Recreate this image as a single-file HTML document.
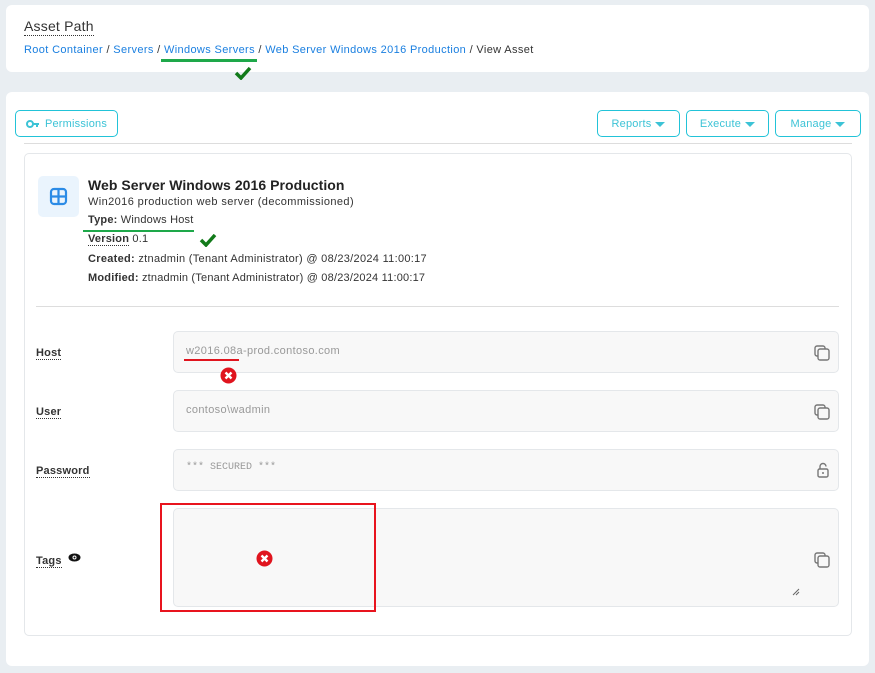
<!DOCTYPE html>
<html><head><style>
*{box-sizing:border-box;margin:0;padding:0}
body{width:875px;height:673px;background:#e9eef2;font-family:"Liberation Sans",sans-serif;position:relative;overflow:hidden;color:#222;letter-spacing:0.2px}
.abs{position:absolute}
.card{position:absolute;background:#fff;border-radius:6px}
a{color:#1a7fe0;text-decoration:none}
.btn{position:absolute;border:1px solid #22c3d8;border-radius:5px;color:#3cc3d6;font-size:11px;display:flex;align-items:center;justify-content:center;height:27px;top:110px}
.tri{display:inline-block;width:0;height:0;border-left:5px solid transparent;border-right:5px solid transparent;border-top:5px solid #3cc3d6;margin-left:4px;margin-top:2px}
.lbl{position:absolute;left:36px;font-size:11px;font-weight:bold;color:#333;border-bottom:1px dotted #333;line-height:12px}
.inp{position:absolute;left:173px;width:666px;background:#f8f8f8;border:1px solid #e4e7ea;border-radius:5px;font-size:11px;color:#999;padding-left:12px}
.ic{position:absolute;right:8px}
.info{position:absolute;left:88px;font-size:11px;color:#333}
</style></head><body>
<div class="card" style="left:6px;top:5px;width:863px;height:67px">
 <div class="abs" style="left:18px;top:13px;font-size:14px;color:#333;border-bottom:1px dotted #333;line-height:17px">Asset Path</div>
 <div class="abs" style="left:18px;top:39px;font-size:11px;color:#333;white-space:nowrap;letter-spacing:0.36px"><a>Root Container</a> / <a>Servers</a> / <a>Windows Servers</a> / <a>Web Server Windows 2016 Production</a> / View Asset</div>
</div>
<div class="abs" style="left:161px;top:59px;width:96px;height:3px;background:#1ea84a"></div>
<svg class="abs" style="left:234px;top:66px" width="18" height="14"><path d="M2 7l5 5L16 2" stroke="#127a1a" stroke-width="3.5" fill="none"/></svg>
<div class="card" style="left:6px;top:92px;width:863px;height:574px"></div>
<div class="btn" style="left:15px;width:103px"><svg width="14" height="10" style="margin-right:5px"><circle cx="4" cy="5" r="3" stroke="#3cc3d6" stroke-width="2" fill="none"/><path d="M7 5h6M11 5v3" stroke="#3cc3d6" stroke-width="2"/></svg>Permissions</div>
<div class="btn" style="left:597px;width:83px">Reports<span class="tri"></span></div>
<div class="btn" style="left:686px;width:83px">Execute<span class="tri"></span></div>
<div class="btn" style="left:775px;width:86px">Manage<span class="tri"></span></div>
<div class="abs" style="left:24px;top:143px;width:828px;height:1px;background:#ddd"></div>
<div class="abs" style="left:24px;top:153px;width:828px;height:483px;border:1px solid #e4e7ea;border-radius:5px"></div>
<div class="abs" style="left:38px;top:176px;width:41px;height:41px;background:#eaf4fd;border-radius:5px"></div>
<svg class="abs" style="left:49px;top:187px" width="19" height="19"><rect x="2" y="2" width="15" height="15" rx="3" stroke="#2b8be6" stroke-width="2.2" fill="none"/><path d="M9.5 2v15M2 9.5h15" stroke="#2b8be6" stroke-width="2.2"/></svg>
<div class="info" style="top:177px;font-size:14px;font-weight:bold;color:#222;letter-spacing:0.05px">Web Server Windows 2016 Production</div>
<div class="info" style="top:196px;letter-spacing:0.4px">Win2016 production web server (decommissioned)</div>
<div class="info" style="top:214px"><b>Type:</b> Windows Host</div>
<div class="abs" style="left:83px;top:230px;width:111px;height:2px;background:#1ea84a"></div>
<div class="info" style="top:233px"><b style="border-bottom:1px dotted #333">Version</b> 0.1</div>
<svg class="abs" style="left:199px;top:234px" width="18" height="13"><path d="M2 6l5 5L16 1" stroke="#127a1a" stroke-width="3.5" fill="none"/></svg>
<div class="info" style="top:253px;letter-spacing:0.3px"><b>Created:</b> ztnadmin (Tenant Administrator) @ 08/23/2024 11:00:17</div>
<div class="info" style="top:272px;letter-spacing:0.2px"><b>Modified:</b> ztnadmin (Tenant Administrator) @ 08/23/2024 11:00:17</div>
<div class="abs" style="left:36px;top:306px;width:803px;height:1px;background:#ddd"></div>

<div class="lbl" style="top:347px">Host</div>
<div class="inp" style="top:331px;height:42px;line-height:38px;letter-spacing:0.35px">w2016.08a-prod.contoso.com<svg class="ic" style="top:13px" width="16" height="16"><rect x="1" y="1" width="10" height="10" rx="2" stroke="#777" stroke-width="1.4" fill="none"/><rect x="4" y="4" width="11" height="11" rx="2" stroke="#777" stroke-width="1.4" fill="#f8f8f8"/></svg></div>
<div class="abs" style="left:184px;top:359px;width:55px;height:2px;background:#e0141e"></div>
<svg class="abs" style="left:220px;top:367px" width="17" height="17"><circle cx="8.5" cy="8.5" r="8" fill="#e0141e"/><path d="M5.5 5.5l6 6M11.5 5.5l-6 6" stroke="#fff" stroke-width="2.4"/></svg>

<div class="lbl" style="top:406px">User</div>
<div class="inp" style="top:390px;height:42px;line-height:38px;letter-spacing:0.35px">contoso\wadmin<svg class="ic" style="top:13px" width="16" height="16"><rect x="1" y="1" width="10" height="10" rx="2" stroke="#777" stroke-width="1.4" fill="none"/><rect x="4" y="4" width="11" height="11" rx="2" stroke="#777" stroke-width="1.4" fill="#f8f8f8"/></svg></div>

<div class="lbl" style="top:465px">Password</div>
<div class="inp" style="top:449px;height:42px;line-height:36px;font-family:'Liberation Mono',monospace;font-size:10px;letter-spacing:0">*** SECURED ***<svg class="ic" style="top:12px" width="14" height="16"><path d="M4 7V4.5a3 3 0 0 1 6 0" stroke="#777" stroke-width="1.4" fill="none"/><rect x="2" y="7" width="10" height="8" rx="1.5" stroke="#777" stroke-width="1.4" fill="none"/><circle cx="7" cy="11" r="1" fill="#777"/></svg></div>

<div class="lbl" style="top:555px">Tags</div>
<svg class="abs" style="left:68px;top:553px" width="13" height="9"><ellipse cx="6.5" cy="4.5" rx="6" ry="4" fill="#111"/><circle cx="6.5" cy="4.5" r="2" fill="#fff"/><circle cx="6.5" cy="4.5" r="1" fill="#111"/></svg>
<div class="inp" style="top:508px;height:99px"><svg class="ic" style="top:43px" width="16" height="16"><rect x="1" y="1" width="10" height="10" rx="2" stroke="#777" stroke-width="1.4" fill="none"/><rect x="4" y="4" width="11" height="11" rx="2" stroke="#777" stroke-width="1.4" fill="#f8f8f8"/></svg><svg class="abs" style="right:38px;bottom:10px" width="8" height="8"><path d="M1 7L7 1M4 7L7 4" stroke="#666" stroke-width="1"/></svg></div>
<div class="abs" style="left:160px;top:503px;width:216px;height:109px;border:2px solid #e8141e"></div>
<svg class="abs" style="left:256px;top:550px" width="17" height="17"><circle cx="8.5" cy="8.5" r="8" fill="#e0141e"/><path d="M5.5 5.5l6 6M11.5 5.5l-6 6" stroke="#fff" stroke-width="2.4"/></svg>
</body></html>
